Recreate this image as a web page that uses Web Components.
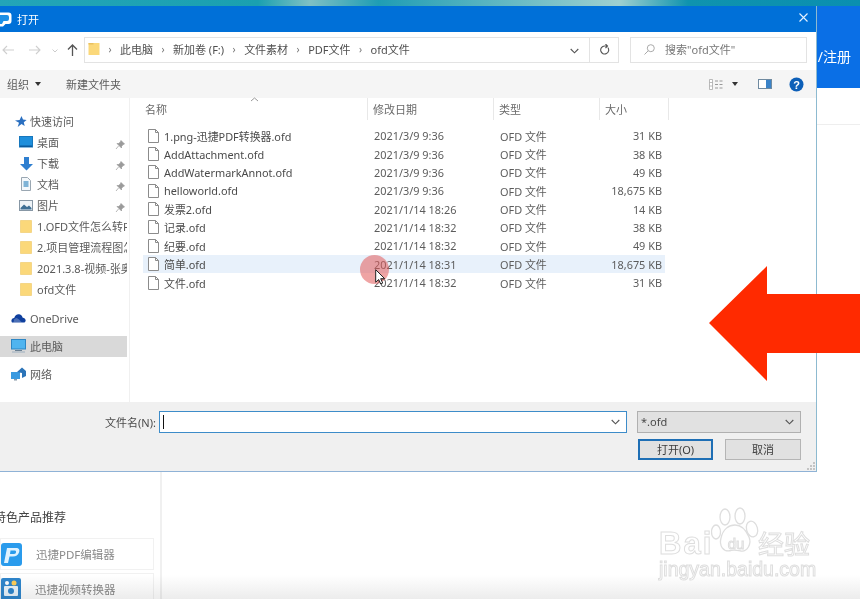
<!DOCTYPE html>
<html lang="zh"><head><meta charset="utf-8"><title>打开</title>
<style>
html,body{margin:0;padding:0;width:860px;height:599px;overflow:hidden;background:#fff}
body{font-family:"Noto Sans","Noto Sans CJK SC",sans-serif;font-size:11px;color:#555}
</style></head><body>
<x-app></x-app>
<script>
const F='"Noto Sans","Noto Sans CJK SC",sans-serif';
const ICONS={
 star:'<svg width="13" height="13" viewBox="0 0 13 13"><path d="M7.5 1 9 4.6l3.6.3-2.8 2.4.9 3.7-3.2-2-3.8 3 1.3-4.3L1 5.4l4.6-.3z" fill="#2a6fc0"/></svg>',
 desktop:'<svg width="14" height="12" viewBox="0 0 14 12"><rect x=".5" y=".5" width="13" height="10.5" fill="#1e8fdc" stroke="#1777bd"/><rect x="1" y="9.5" width="12" height="1.5" fill="#0b5a9c"/></svg>',
 down:'<svg width="15" height="15" viewBox="0 0 15 15"><path d="M5 1h5v7h4l-6.500 6.500L1 8h4z" fill="#2f7fd0"/></svg>',
 doc:'<svg width="12" height="14" viewBox="0 0 12 14"><path d="M1.500.5h6l3 3v10h-9z" fill="#f4f8fb" stroke="#9aa7b2"/><rect x="3.500" y="4" width="5" height="6" fill="#7fb3d6"/></svg>',
 pic:'<svg width="14" height="11" viewBox="0 0 14 11"><rect x=".5" y=".5" width="13" height="10" fill="#eef3f7" stroke="#8797a5"/><path d="M1.500 8 5 4.500 8 7l2-1.500L12.500 8v1.500h-11z" fill="#3e6f95"/></svg>',
 folder:'<svg width="12" height="13" viewBox="0 0 12 13"><path d="M.5.500h11v12H.5z" fill="#fbd87a" stroke="#eec765" stroke-width=".6"/></svg>',
 cloud:'<svg width="15" height="10" viewBox="0 0 15 10"><path d="M1 9.500C-.5 7.500 1 5 3.200 5 4 2 6.500 .5 9 1.500c1.500.6 2.300 1.700 2.500 3C13.500 4.800 15 6.500 14.600 8c-.2.900-.8 1.500-1.700 1.500z" fill="#0f3f9e"/><path d="M3 6.500c1.500-2 3-2 5 0l3 3H2.500z" fill="#fff" opacity=".25"/></svg>',
 pc:'<svg width="15" height="14" viewBox="0 0 15 14"><rect x=".5" y=".5" width="14" height="9.500" fill="#4fb4ef" stroke="#2d86c4"/><rect x="4" y="11" width="7" height="1" fill="#6a7f91"/><rect x="1" y="12.500" width="13" height="1" fill="#9db0bf"/></svg>',
 net:'<svg width="15" height="14" viewBox="0 0 15 14"><rect x="0" y="5" width="9" height="7" fill="#3a9ae0"/><path d="M6 5 11 .5 15 4v5l-4 2V6z" fill="#2c74b8"/><rect x="3" y="12" width="3" height="1.500" fill="#8a9aa8"/></svg>',
 pin:'<svg width="10" height="10" viewBox="0 0 10 10"><path d="M6 .5 9.500 4 8 4.500 6.500 6.500 6.500 8 2 3.500 3.500 3.500 5.500 2zM3.500 6 1 9" fill="#9a9a9a" stroke="#9a9a9a" stroke-width=".7"/></svg>',
 file:'<svg width="11" height="14" viewBox="0 0 11 14"><path d="M.5.500h7l3 3v10H.5z" fill="#fff" stroke="#8b8b8b"/><path d="M7.500.500v3h3" fill="none" stroke="#8b8b8b"/></svg>',
 chev:'<svg width="9" height="6" viewBox="0 0 9 6" style="display:block"><path d="M.7 1 4.500 4.800 8.300 1" fill="none" stroke="#555" stroke-width="1.100"/></svg>'
};
function el(name,css,html){
 customElements.define(name,class extends HTMLElement{
  connectedCallback(){
   if(this.shadowRoot)return;
   const s=this.attachShadow({mode:'open'});
   s.innerHTML='<style>'+css+'</style>'+(typeof html==='function'?html(this):html);
  }
 });
}
el('x-nav',`:host{display:flex;align-items:center;height:21px;position:relative;color:#5a5a5a;font-size:11px;white-space:nowrap;overflow:hidden}
 :host([sel]){background:#d9d9d9}
 .i{width:16px;display:flex;justify-content:center;flex:none}
 .t{flex:none;max-width:90px;overflow:hidden}
 .pin{position:absolute;left:115px;top:6px}`,
 h=>{const lv=h.hasAttribute('sub');return `<span class="i" style="margin-left:${lv?18:h.hasAttribute('qa')?12:10}px;margin-right:${lv?3:h.hasAttribute('qa')?2:4}px">${ICONS[h.getAttribute('icon')]}</span><span class="t"><slot></slot></span>${h.hasAttribute('pin')?`<span class="pin">${ICONS.pin}</span>`:''}`});
el('x-sidebar',`:host{display:block;width:130px;flex:none;border-right:1px solid #f0f0f0;padding-top:12.500px;box-sizing:border-box;background:#fff}
 .w{width:127px}`,
 ()=>`<div class="w"><slot></slot></div>`);
el('x-file',`:host{display:grid;grid-template-columns:231px 126px 162px;height:18.35px;align-items:center;color:#5c5c5c;font-size:10.900px;white-space:nowrap}
 :host([hl]){background:#e8f1fb}
 .n{display:flex;align-items:center;gap:5px;padding-left:5px;color:#4a4a4a}
 .y{grid-column:3;grid-row:1}
 .s{grid-column:3;grid-row:1;text-align:right}`,
 h=>`<div class="n">${ICONS.file}<span><slot></slot></span></div><div>${h.getAttribute('d')}</div><div class="y">OFD 文件</div><div class="s">${h.getAttribute('z')}</div>`);
el('x-head',`:host{display:grid;grid-template-columns:238px 126px 106px 69px;height:24px;position:relative;color:#6a6a6a;font-size:11px}
 div{display:flex;align-items:center;padding-left:5px;border-right:1px solid #e8e8e8;margin-bottom:2px}
 div:first-of-type{padding-left:15px}
 svg{position:absolute;left:120px;top:-1px}`,
 `<div>名称</div><div>修改日期</div><div>类型</div><div>大小</div><svg width="9" height="5" viewBox="0 0 9 5"><path d="M1 4 4.500 1 8 4" fill="none" stroke="#999"/></svg>`);
el('x-list',`:host{display:block;flex:1;background:#fff;min-width:0}.r{padding:4.600px 0 0 13px;width:522px}`,
 `<x-head></x-head><div class="r"><slot></slot></div>`);
el('x-title',`:host{display:flex;align-items:center;height:26px;background:#0070d8;color:#fff;font-size:11px;position:relative;flex:none}
 svg.l{margin-right:5px;flex:none}
 svg.x{position:absolute;right:8px;top:7px}`,
 `<svg class="l" width="12" height="15" viewBox="0 0 12 15"><path d="M0 .5h8.500a3 3 0 0 1 3 3v5.500a3 3 0 0 1-3 3H5.500L3 14.500H0z" fill="#fff"/><path d="M0 3h7a2 2 0 0 1 2 2v2a2 2 0 0 1-2 2H3.500L2 12H0z" fill="#1c8fe6"/></svg><span>打开</span>
 <svg class="x" width="9" height="9" viewBox="0 0 9 9"><path d="M.5.500l8 8M8.500.500l-8 8" stroke="#e6f2ff" stroke-width="1.100"/></svg>`);
el('x-address',`:host{display:flex;align-items:flex-start;box-sizing:border-box;padding-top:5px;height:38px;background:#fff;flex:none;font-size:11px;color:#4f4f4f}
 .nav{width:84px;height:26px;flex:none;position:relative}
 .nav svg{position:absolute}
 .box{width:505px;height:26px;box-sizing:border-box;border:1px solid #e3e3e3;border-right:0;display:flex;align-items:center;padding:0 0 2px 3px;white-space:nowrap;position:relative}
 .box .s{color:#777;width:9px;text-align:center;font-size:10px;margin:0 5.500px}
 .box .c{position:absolute;right:10px;top:10px}
 .ref{width:30px;height:26px;box-sizing:border-box;border:1px solid #e3e3e3;display:flex;align-items:center;justify-content:center}
 .search{width:177px;height:26px;box-sizing:border-box;border:1px solid #e3e3e3;margin-left:11px;display:flex;align-items:center;color:#777;gap:10px;padding:0 0 2px 13px}`,
 `<div class="nav">
  <svg style="left:2px;top:8px" width="12" height="10" viewBox="0 0 12 10"><path d="M12 5H1M5 1 1 5l4 4" fill="none" stroke="#cfcfcf" stroke-width="1.100"/></svg>
  <svg style="left:29px;top:8px" width="12" height="10" viewBox="0 0 12 10"><path d="M0 5h11M7 1l4 4-4 4" fill="none" stroke="#cfcfcf" stroke-width="1.100"/></svg>
  <svg style="left:52px;top:12px" width="6" height="4" viewBox="0 0 6 4"><path d="M.5.500 3 3 5.500.5" fill="none" stroke="#ccc"/></svg>
  <svg style="left:67px;top:7px" width="11" height="12" viewBox="0 0 11 12"><path d="M5.500 12V1M1 5.500 5.500 1 10 5.500" fill="none" stroke="#555" stroke-width="1.300"/></svg>
 </div>
 <div class="box"><svg width="12" height="14" viewBox="0 0 12 14"><path d="M.5 1h11v12H.5z" fill="#fbd87a"/><path d="M.5 1h5v1.500h-5z" fill="#e8c060"/></svg><span class="s">›</span><span>此电脑</span><span class="s">›</span><span>新加卷 (F:)</span><span class="s">›</span><span>文件素材</span><span class="s">›</span><span>PDF文件</span><span class="s">›</span><span>ofd文件</span><span class="c">${ICONS.chev}</span></div>
 <div class="ref"><svg width="11" height="12" viewBox="0 0 11 12"><path d="M8.800 3.500A4 4 0 1 1 5.500 2H8M6.500 0 8.500 2 6.500 4" fill="none" stroke="#555" stroke-width="1.100"/></svg></div>
 <div class="search"><svg width="11" height="11" viewBox="0 0 11 11"><circle cx="6.800" cy="4.200" r="3.500" fill="none" stroke="#aaa"/><path d="M4.300 6.700.5 10.500" stroke="#aaa"/></svg><span>搜索"ofd文件"</span></div>`);
el('x-toolbar',`:host{display:flex;align-items:center;height:28px;background:#f5f5f5;flex:none;font-size:11px;color:#5a5a5a;white-space:nowrap}
 .o{margin-left:7px;display:flex;align-items:center;gap:6px}
 .tri{width:0;height:0;border:3.500px solid transparent;border-top:4px solid #333;border-bottom:0}
 .n{margin-left:25px}
 .r{margin-left:auto;display:flex;align-items:center;margin-right:12.500px}
 .view{margin-right:9px}
 .pane{margin-left:20px;margin-right:17px}`,
 `<span class="o">组织<i class="tri"></i></span><span class="n">新建文件夹</span>
 <span class="r"><svg class="view" width="14" height="11" viewBox="0 0 14 11"><path d="M.5.500h3v10h-3zM.5 3.500h3M.5 7h3" fill="#fff" stroke="#aaa" stroke-width=".8"/><path d="M6 2h3M6 5.500h3M6 9h3M10.500 2h3M10.500 5.500h3M10.500 9h3" stroke="#999"/></svg><i class="tri"></i>
 <svg class="pane" width="14" height="10" viewBox="0 0 14 10"><rect x=".5" y=".5" width="13" height="9" fill="#fff" stroke="#6f8aa0"/><rect x="8" y="1" width="5" height="8" fill="#3b83c8"/></svg>
 <svg width="15" height="15" viewBox="0 0 15 15"><circle cx="7.500" cy="7.500" r="7" fill="#0d5fb8"/><text x="7.500" y="11.500" text-anchor="middle" font-family="Liberation Sans" font-weight="700" font-size="11" fill="#fff">?</text></svg></span>`);
el('x-footer',`:host{display:block;height:69.500px;background:#f0f0f0;box-sizing:border-box;padding-top:9px;flex:none;font-size:11px;color:#4a4a4a;position:relative}
 .a{display:flex;align-items:center;padding-left:105px;height:22px;white-space:nowrap}
 .lb{width:50px;margin-right:4px}
 .in{width:468px;height:22px;box-sizing:border-box;background:#fff;border:1px solid #3d8cc9;position:relative;display:flex;align-items:center;justify-content:flex-end;padding-right:6px}
 .in i{position:absolute;left:3px;top:3px;width:1px;height:14px;background:#111}
 .sel{width:164px;height:22px;box-sizing:border-box;margin-left:10px;background:#e1e1e1;border:1px solid #b0b0b0;display:flex;align-items:center;justify-content:space-between;padding:0 6px 0 3px}
 .b{display:flex;justify-content:flex-end;padding-right:15px;margin-top:6px;gap:12px}
 .btn{width:76px;height:21px;box-sizing:border-box;background:#e1e1e1;border:1px solid #b5b5b5;display:flex;align-items:center;justify-content:center;color:#3c3c3c}
 .btn.d{width:75px;border:2px solid #1f6fb5}
 svg.g{position:absolute;right:1px;bottom:1px}`,
 `<div class="a"><span class="lb">文件名(N):</span><div class="in"><i></i>${ICONS.chev}</div><div class="sel"><span>*.ofd</span>${ICONS.chev}</div></div>
 <div class="b"><div class="btn d">打开(O)</div><div class="btn">取消</div></div>
 <svg class="g" width="8" height="8" viewBox="0 0 8 8"><path d="M6 0h2v2H6zM3 3h2v2H3zM6 3h2v2H6zM0 6h2v2H0zM3 6h2v2H3zM6 6h2v2H6z" fill="#c4c4c4"/></svg>`);
el('x-dialog',`:host{position:absolute;left:0;top:6px;width:817px;height:466px;box-sizing:border-box;display:flex;flex-direction:column;background:#fff;border-right:1.500px solid #8dbad0;border-bottom:1.500px solid #8fb2d6;filter:blur(.4px)}
 .m{flex:1;display:flex;min-height:0}`,
 `<x-title></x-title><x-address></x-address><x-toolbar></x-toolbar><div class="m"><slot></slot></div><x-footer></x-footer>`);
el('x-card',`:host{display:flex;align-items:center;height:32px;box-sizing:border-box;border:1px solid #f1f1f1;margin-bottom:3px;color:#8a8a8a;font-size:11.500px}
 span.i{margin-right:14px;display:flex}`,
 h=>`<span class="i">${h.getAttribute('k')==='pdf'?'<svg width="21" height="23" viewBox="0 0 21 23"><rect width="21" height="23" rx="3" fill="#2a9bec"/><path d="M3 20 6 5h9c3 0 4 2 3 4.500s-3 4-6 4H8.500L7 20z" fill="#dff2ff"/><path d="M9.500 7.500h4.500c1.500 0 1.500 3.500-1 3.500H9z" fill="#2a9bec"/></svg>':'<svg width="20" height="23" viewBox="0 0 20 23"><rect width="20" height="23" rx="2" fill="#2f86cc"/><rect x="3" y="8" width="14" height="10" rx="1" fill="#e8f4fc"/><circle cx="10" cy="13" r="3" fill="#2f86cc"/><circle cx="6" cy="5" r="2" fill="#fff"/><circle cx="13" cy="5" r="2.500" fill="#ffcf5a"/></svg>'}</span><slot></slot>`);
el('x-back',`:host{position:absolute;inset:0;display:flex;flex-direction:column;background:#fff;overflow:hidden}
 .top{height:6px;flex:none;background:linear-gradient(90deg,#23a5b8,#1aa0b0 30%,#7fc0c4 36%,#1f9db4 44%,#9fd0d0 72%,#0f93ae 80%,#0a8fb0)}
 .hd{height:82px;flex:none;background:#0a6fe6;color:#fff;font-size:14px;display:flex;justify-content:flex-end;align-items:flex-start;padding:40px 9px 0 0;box-sizing:border-box;white-space:nowrap;filter:blur(.3px)}
 .bd{flex:1;display:flex;position:relative}
 .l{width:162px;box-sizing:border-box;border-right:2px solid #f0f0f0;padding:422px 6px 0 0;flex:none}
 .h{font-size:12px;color:#444;margin:0 0 12px -6px;line-height:16px;white-space:nowrap}
 .line{position:absolute;left:817px;right:0;top:36px;height:1px;background:#eee}`,
 `<div class="top"></div><div class="hd">/注册</div><div class="bd"><div class="l"><div class="h">特色产品推荐</div><slot></slot></div><div class="line"></div></div>`);
el('x-mark',`:host{position:absolute;left:659px;top:505px;width:158px;height:76px;font-family:"Liberation Sans",sans-serif;color:#fff}
 .s{-webkit-text-stroke:1px #dedede;white-space:nowrap;line-height:1}
 .b{position:absolute;left:0;top:25px;height:28px;line-height:28px;font-size:31px;font-weight:700;letter-spacing:2px}
 .du{position:absolute;left:64px;top:29px;width:26px;height:20px;font-size:15px;text-align:center;line-height:20px}
 .j{position:absolute;font-family:"Noto Sans CJK SC";font-size:26px;left:99px;top:24px;height:28px;line-height:28px}
 .u{position:absolute;left:0;top:55px;font-size:19.500px;font-weight:400}
 svg{position:absolute;left:52px;top:1px}`,
 `<svg width="48" height="50" viewBox="0 0 48 50" fill="#fff" stroke="#dedede" stroke-width="1.300"><ellipse cx="14" cy="11" rx="5" ry="8"/><ellipse cx="29" cy="10" rx="5" ry="8"/><ellipse cx="41" cy="23" rx="5.500" ry="8" transform="rotate(-15 41 23)"/><ellipse cx="5" cy="26" rx="4.500" ry="7"/><path d="M10 32c2-9 8-13 14-13s11 5 14 12c3 7-2 15-8 14-4-.8-7-1.500-10-.5-8 2-12-5-10-12.500z"/></svg>
 <div class="s b">Bai</div><div class="s du">du</div><div class="s j">经验</div><div class="s u">jingyan.baidu.com</div>`);
el('x-pointer',`:host{position:absolute;left:360px;top:255px;width:30px;height:34px}
 i{position:absolute;left:0;top:0;width:29px;height:29px;border-radius:50%;background:rgba(226,90,90,.55);filter:blur(.6px)}
 svg{position:absolute;left:15px;top:14px}`,
 `<i></i><svg width="11" height="16" viewBox="0 0 11 16"><path d="M.7.700v12.500l3-2.700 2 4.500 2-.9-2-4.400h4z" fill="#fff" stroke="#222"/></svg>`);
el('x-arrow',`:host{position:absolute;left:709px;top:265px;width:151px;height:117px}svg{display:block}`,
 `<svg width="151" height="117" viewBox="0 0 151 117"><path d="M0 58 58 1v28h93v59H58v28z" fill="#ff2a00"/></svg>`);
el('x-fade',`:host{position:absolute;left:0;right:0;bottom:0;height:24px;background:linear-gradient(#fff,#ececec);mix-blend-mode:multiply;pointer-events:none}`,'');
el('x-app',`:host{display:block;position:relative;width:860px;height:599px;overflow:hidden;font-family:${F}}`,
 `<x-back><x-card k="pdf">迅捷PDF编辑器</x-card><x-card k="v">迅捷视频转换器</x-card></x-back>
 <x-fade></x-fade>
 <x-dialog>
  <x-sidebar>
   <x-nav qa icon="star">快速访问</x-nav>
   <x-nav sub pin icon="desktop">桌面</x-nav>
   <x-nav sub pin icon="down">下载</x-nav>
   <x-nav sub pin icon="doc">文档</x-nav>
   <x-nav sub pin icon="pic">图片</x-nav>
   <x-nav sub icon="folder">1.OFD文件怎么转P</x-nav>
   <x-nav sub icon="folder">2.项目管理流程图怎</x-nav>
   <x-nav sub icon="folder">2021.3.8-视频-张奥</x-nav>
   <x-nav sub icon="folder">ofd文件</x-nav>
   <x-nav icon="cloud" style="margin-top:8px">OneDrive</x-nav>
   <x-nav sel icon="pc" style="margin-top:7px">此电脑</x-nav>
   <x-nav icon="net" style="margin-top:7px">网络</x-nav>
  </x-sidebar>
  <x-list>
   <x-file d="2021/3/9 9:36" z="31 KB">1.png-迅捷PDF转换器.ofd</x-file>
   <x-file d="2021/3/9 9:36" z="38 KB">AddAttachment.ofd</x-file>
   <x-file d="2021/3/9 9:36" z="49 KB">AddWatermarkAnnot.ofd</x-file>
   <x-file d="2021/3/9 9:36" z="18,675 KB">helloworld.ofd</x-file>
   <x-file d="2021/1/14 18:26" z="14 KB">发票2.ofd</x-file>
   <x-file d="2021/1/14 18:32" z="38 KB">记录.ofd</x-file>
   <x-file d="2021/1/14 18:32" z="49 KB">纪要.ofd</x-file>
   <x-file hl d="2021/1/14 18:31" z="18,675 KB">简单.ofd</x-file>
   <x-file d="2021/1/14 18:32" z="31 KB">文件.ofd</x-file>
  </x-list>
 </x-dialog>
 <x-pointer></x-pointer>
 <x-arrow></x-arrow>
 <x-mark></x-mark>`);
</script>
</body></html>
